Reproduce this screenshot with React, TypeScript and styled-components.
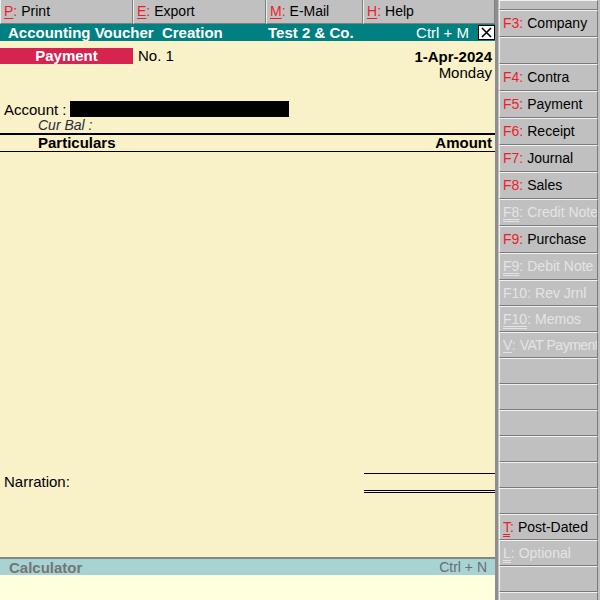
import React from 'react';
import styled, { createGlobalStyle } from 'styled-components';

const GlobalStyle = createGlobalStyle`
  html, body { margin: 0; padding: 0; }
  body {
    font-family: "Liberation Sans", Arial, sans-serif;
    background: #c0c0c0;
  }
  * { box-sizing: border-box; }
`;

const Screen = styled.div`
  display: grid;
  grid-template-columns: 495px 105px;
  width: 600px;
  height: 600px;
  overflow: hidden;
`;

const MainPane = styled.div`
  display: flex;
  flex-direction: column;
  height: 600px;
  min-width: 0;
`;

/* ---------- top action bar ---------- */
const ActionBar = styled.div`
  display: grid;
  grid-template-columns: 133px 133px 97px 132px;
  flex: none;
  height: 24px;
  background: #c0c0c0;
`;

const ActionButton = styled.div`
  display: flex;
  align-items: center;
  height: 24px;
  padding: 0 0 1px 3px;
  border-left: 1px solid #ececec;
  border-right: 1px solid #7f7f7f;
  border-bottom: 1px solid #7f7f7f;
  font-size: 14px;
  color: #000;
  white-space: nowrap;
`;

const Key = styled.span<{ $muted?: boolean }>`
  color: ${(p) => (p.$muted ? '#e4e4e4' : '#ee1d2b')};
  margin-right: 4px;
`;

const Hot = styled.span<{ $double?: boolean }>`
  text-decoration: underline;
  text-decoration-style: ${(p) => (p.$double ? 'double' : 'solid')};
  text-underline-offset: 2px;
`;

const Label = styled.span<{ $muted?: boolean; $tight?: boolean }>`
  color: ${(p) => (p.$muted ? '#e4e4e4' : '#000')};
  letter-spacing: ${(p) => (p.$tight ? '-0.5px' : 'normal')};
`;

/* ---------- title bar ---------- */
const TitleBar = styled.div`
  display: flex;
  align-items: center;
  flex: none;
  height: 17px;
  padding-left: 8px;
  background: #008080;
  color: #fff;
  font-size: 15px;
`;

const TitleText = styled.span`
  width: 260px;
  font-weight: bold;
  white-space: pre;
`;

const CompanyName = styled.span`
  flex: 1;
  font-weight: bold;
`;

const Shortcut = styled.span`
  margin-right: 9px;
`;

const CloseBox = styled.div`
  display: flex;
  align-items: center;
  justify-content: center;
  width: 17px;
  height: 15px;
  background: #fff;
  border: 1px solid #000;
`;

/* ---------- voucher body ---------- */
const VoucherBody = styled.div`
  flex: 1;
  display: flex;
  flex-direction: column;
  padding-top: 7px;
  background: #f9f1c8;
  font-size: 15px;
  color: #000;
`;

const TopRow = styled.div`
  display: flex;
  justify-content: space-between;
  align-items: flex-start;
  padding-right: 3px;
`;

const TypeGroup = styled.div`
  display: flex;
  align-items: center;
  line-height: 16px;
`;

const TypeBadge = styled.div`
  width: 133px;
  height: 16px;
  line-height: 16px;
  background: #d7234f;
  color: #fff;
  font-weight: bold;
  text-align: center;
`;

const VoucherNo = styled.span`
  margin-left: 5px;
`;

const DateStack = styled.div`
  display: flex;
  flex-direction: column;
  align-items: flex-end;
  margin-top: 1px;
  line-height: 16px;
`;

const DateText = styled.span`
  font-weight: bold;
`;

const AccountRow = styled.div`
  display: flex;
  align-items: center;
  height: 16px;
  margin-top: 20px;
  padding-left: 4px;
`;

const RedactedField = styled.div`
  width: 219px;
  height: 16px;
  margin-left: 3px;
  background: #000;
`;

const BalanceRow = styled.div`
  height: 16px;
  line-height: 16px;
  padding-left: 38px;
  font-size: 14px;
  font-style: italic;
  color: #2b2b3c;
`;

const ColumnHeader = styled.div`
  display: flex;
  justify-content: space-between;
  height: 19px;
  line-height: 16px;
  padding: 0 3px 0 38px;
  border-top: 2px solid #000;
  border-bottom: 1px solid #000;
  font-weight: bold;
`;

const EntryArea = styled.div`
  flex: 1;
`;

const NarrationRow = styled.div`
  display: flex;
  justify-content: space-between;
  align-items: flex-start;
  margin-bottom: 64px;
`;

const NarrationLabel = styled.span`
  padding: 1px 0 0 4px;
  line-height: 16px;
`;

const TotalBox = styled.div`
  width: 131px;
  height: 20px;
  border-top: 1px solid #000;
  border-bottom: 3px double #000;
`;

/* ---------- calculator strip ---------- */
const CalcBar = styled.div`
  display: flex;
  justify-content: space-between;
  align-items: center;
  flex: none;
  height: 18px;
  padding: 0 8px 0 9px;
  border-top: 2px solid #858585;
  background: #a7d3d3;
  font-size: 15px;
`;

const CalcTitle = styled.span`
  font-weight: bold;
  color: #757575;
`;

const CalcShortcut = styled.span`
  font-size: 14px;
  color: #6a6a78;
`;

const CalcBody = styled.div`
  flex: none;
  height: 25px;
  background: #fffedd;
`;

/* ---------- right-hand button panel ---------- */
const SidePanel = styled.div`
  display: grid;
  grid-template-rows: 10px repeat(10, 27px) repeat(13, 26px);
  height: 600px;
  overflow: hidden;
  padding: 0 2px 0 1px;
  border-left: 3px solid #8e8e8e;
  background: #c0c0c0;
`;

const SideButton = styled.div`
  display: flex;
  align-items: center;
  min-width: 0;
  padding: 0 0 1px 3px;
  border-top: 1px solid #f2f2f2;
  border-left: 1px solid #f2f2f2;
  border-bottom: 1px solid #7a7a7a;
  border-right: 1px solid #7a7a7a;
  font-size: 14px;
  white-space: nowrap;
  overflow: hidden;
`;

type SideItem = {
  key?: string;
  hot?: string;
  label?: string;
  muted?: boolean;
  double?: boolean;
  tight?: boolean;
};

const sideItems: SideItem[] = [
  {},
  { key: 'F3', label: 'Company' },
  {},
  { key: 'F4', label: 'Contra' },
  { key: 'F5', label: 'Payment' },
  { key: 'F6', label: 'Receipt' },
  { key: 'F7', label: 'Journal' },
  { key: 'F8', label: 'Sales' },
  { hot: 'F8', label: 'Credit Note', muted: true, double: true },
  { key: 'F9', label: 'Purchase' },
  { hot: 'F9', label: 'Debit Note', muted: true, double: true },
  { key: 'F10', label: 'Rev Jrnl', muted: true },
  { hot: 'F10', label: 'Memos', muted: true, double: true },
  { hot: 'V', label: 'VAT Payment', muted: true, tight: true },
  {},
  {},
  {},
  {},
  {},
  {},
  { hot: 'T', label: 'Post-Dated', double: true },
  { hot: 'L', label: 'Optional', muted: true, double: true },
  {},
  {},
];

const actions = [
  { hot: 'P', label: 'Print' },
  { hot: 'E', label: 'Export' },
  { hot: 'M', label: 'E-Mail' },
  { hot: 'H', label: 'Help' },
];

function SideEntry({ item }: { item: SideItem }) {
  if (!item.label) return <SideButton />;
  return (
    <SideButton>
      <Key $muted={item.muted}>
        {item.hot ? <Hot $double={item.double}>{item.hot}</Hot> : item.key}:
      </Key>
      <Label $muted={item.muted} $tight={item.tight}>
        {item.label}
      </Label>
    </SideButton>
  );
}

export default function App() {
  return (
    <>
      <GlobalStyle />
      <Screen>
        <MainPane>
          <ActionBar>
            {actions.map((a) => (
              <ActionButton key={a.hot}>
                <Key>
                  <Hot>{a.hot}</Hot>:
                </Key>
                <Label>{a.label}</Label>
              </ActionButton>
            ))}
          </ActionBar>

          <TitleBar>
            <TitleText>{'Accounting Voucher  Creation'}</TitleText>
            <CompanyName>Test 2 &amp; Co.</CompanyName>
            <Shortcut>Ctrl + M</Shortcut>
            <CloseBox>
              <svg width="11" height="11" viewBox="0 0 11 11">
                <path d="M1 1 L10 10 M10 1 L1 10" stroke="#000" strokeWidth="1.6" />
              </svg>
            </CloseBox>
          </TitleBar>

          <VoucherBody>
            <TopRow>
              <TypeGroup>
                <TypeBadge>Payment</TypeBadge>
                <VoucherNo>No. 1</VoucherNo>
              </TypeGroup>
              <DateStack>
                <DateText>1-Apr-2024</DateText>
                <span>Monday</span>
              </DateStack>
            </TopRow>

            <AccountRow>
              <span>Account :</span>
              <RedactedField />
            </AccountRow>
            <BalanceRow>Cur Bal :</BalanceRow>

            <ColumnHeader>
              <span>Particulars</span>
              <span>Amount</span>
            </ColumnHeader>

            <EntryArea />

            <NarrationRow>
              <NarrationLabel>Narration:</NarrationLabel>
              <TotalBox />
            </NarrationRow>
          </VoucherBody>

          <CalcBar>
            <CalcTitle>Calculator</CalcTitle>
            <CalcShortcut>Ctrl + N</CalcShortcut>
          </CalcBar>
          <CalcBody />
        </MainPane>

        <SidePanel>
          {sideItems.map((item, i) => (
            <SideEntry key={i} item={item} />
          ))}
        </SidePanel>
      </Screen>
    </>
  );
}
